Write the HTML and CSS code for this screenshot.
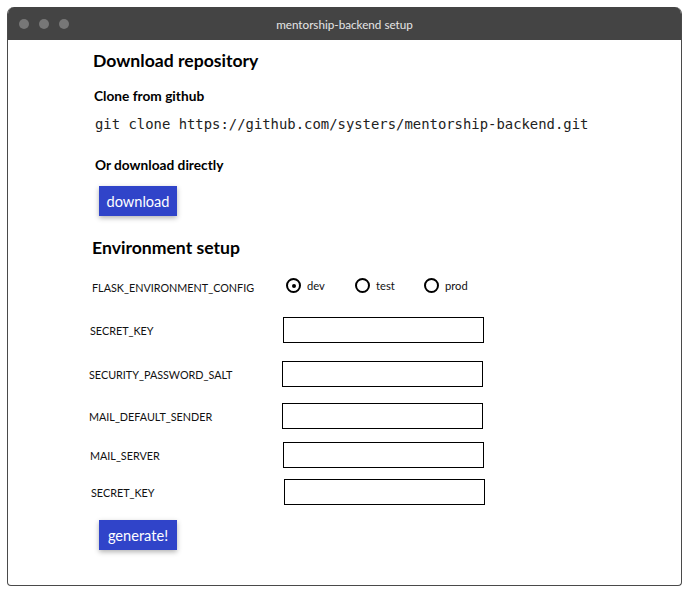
FILE: index.html
```html
<!DOCTYPE html>
<html>
<head>
<meta charset="utf-8">
<link rel="stylesheet" href="styles.css">
</head>
<body>
<div class="window">
  <div class="titlebar">
    <div class="dots"><span></span><span></span><span></span></div>
    <div class="title">mentorship-backend setup</div>
  </div>
  <div class="content">
    <h2 class="h-download">Download repository</h2>
    <h3 class="h-clone">Clone from github</h3>
    <div class="code">git clone https://github.com/systers/mentorship-backend.git</div>
    <h3 class="h-direct">Or download directly</h3>
    <button class="btn btn-download">download</button>
    <h2 class="h-env">Environment setup</h2>
    <div class="row row-radio">
      <div class="label">FLASK_ENVIRONMENT_CONFIG</div>
      <div class="radios">
        <label class="radio"><span class="circle checked"></span>dev</label>
        <label class="radio"><span class="circle"></span>test</label>
        <label class="radio"><span class="circle"></span>prod</label>
      </div>
    </div>
    <div class="row r1"><div class="label">SECRET_KEY</div><input class="field" type="text"></div>
    <div class="row r2"><div class="label">SECURITY_PASSWORD_SALT</div><input class="field" type="text"></div>
    <div class="row r3"><div class="label">MAIL_DEFAULT_SENDER</div><input class="field" type="text"></div>
    <div class="row r4"><div class="label">MAIL_SERVER</div><input class="field" type="text"></div>
    <div class="row r5"><div class="label">SECRET_KEY</div><input class="field" type="text"></div>
    <button class="btn btn-generate">generate!</button>
  </div>
</div>
</body>
</html>
```
FILE: styles.css
```css
* { box-sizing: border-box; }
html, body { margin: 0; padding: 0; background: #fff; }
body { font-family: Lato, "Open Sans", sans-serif; color: #000; }
.window {
  margin: 7px 0 0 7px;
  width: 675px;
  height: 579px;
  border: 1px solid #4a4a4a;
  border-top: none;
  border-radius: 7px 7px 4px 4px;
  overflow: hidden;
  background: #fff;
}
.titlebar {
  height: 33px;
  background: #444;
  display: flex;
  align-items: center;
  position: relative;
}
.dots { display: flex; gap: 10px; padding-left: 11px; }
.dots span { width: 10px; height: 10px; border-radius: 50%; background: #777; }
.title {
  position: absolute; left: 0; right: 0; top: 0; bottom: 0;
  display: flex; align-items: center; justify-content: center;
  color: #e6e6e6; font-size: 11.7px; padding-top: 0;
}
.content { padding: 10px 0 0 85px; display: flex; flex-direction: column; align-items: flex-start; }
h2 { font-size: 17.6px; font-weight: 700; margin: 0; line-height: 22px; }
h3 { font-size: 13.7px; font-weight: 700; margin: 0; line-height: 18px; }
.h-clone { margin: 15px 0 0 1px; }
.code {
  font-family: "DejaVu Sans Mono", monospace;
  font-size: 13.9px; line-height: 20px; margin: 9px 0 0 2px; color: #222;
}
.h-direct { margin: 22px 0 0 2px; }
.btn {
  background: #3044c9; color: #fff; border: none; font-family: inherit;
  font-size: 14.6px; height: 30px; width: 78px; padding: 0;
  box-shadow: 0 2px 5px rgba(0,0,0,0.3);
}
.btn-download { margin: 12px 0 0 6px; }
.h-env { margin: 21px 0 0 -1px; }
.row { display: flex; align-items: center; }
.label { font-size: 10.8px; color: #111; }
.row-radio { margin-top: 18px; margin-left: -1px; }
.row-radio .label { width: 194px; padding-top: 4px; }
.radios { display: flex; }
.radio { display: flex; align-items: center; font-size: 11.2px; color: #111; width: 69px; }
.circle {
  width: 15px; height: 15px; border: 2px solid #000; border-radius: 50%;
  margin-right: 6px; position: relative;
}
.circle.checked::after {
  content: ""; position: absolute; left: 3.5px; top: 3.5px; width: 4px; height: 4px;
  background: #000; border-radius: 50%;
}
.field { width: 201px; height: 26px; border: 1.5px solid #000; border-radius: 0; margin: 0; padding: 0 4px; }
.r1 { margin-top: 23px; margin-left: -3px; }
.r1 .label { width: 193px; }
.r2 { margin-top: 18px; margin-left: -4px; }
.r2 .label { width: 193px; }
.r3 { margin-top: 16px; margin-left: -4px; }
.r3 .label { width: 193px; }
.r4 { margin-top: 13px; margin-left: -3px; }
.r4 .label { width: 193px; }
.r5 { margin-top: 11px; margin-left: -2px; }
.r5 .label { width: 193px; }
.btn-generate { margin: 15px 0 0 6px; }
```
